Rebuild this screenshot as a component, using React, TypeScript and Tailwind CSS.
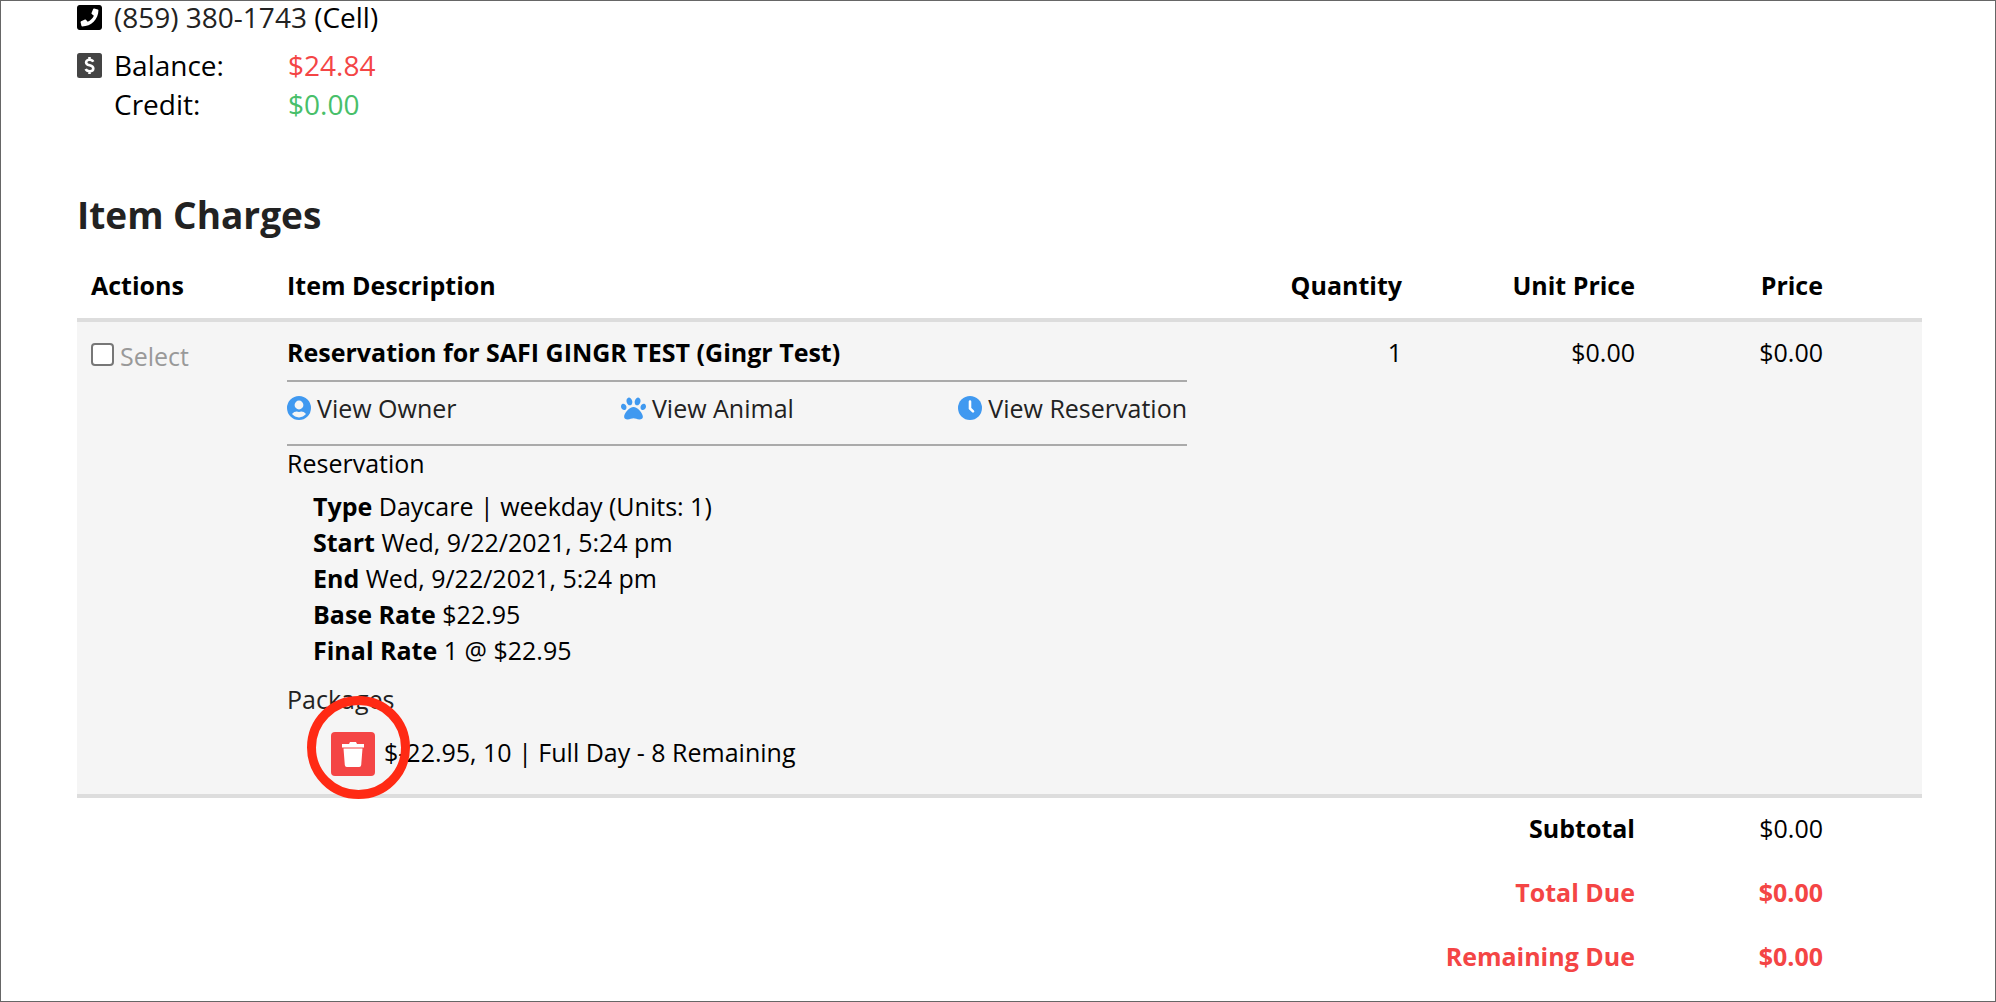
import type { ReactNode } from "react";
import { FaPaw, FaPhoneSquare } from "react-icons/fa";

function DollarSquareIcon() {
  return (
    <svg viewBox="0 0 25 25" className="size-[25px]" aria-hidden="true">
      <rect width="25" height="25" rx="2.5" fill="#444" />
      <path
        d="M16.200 8.800C15.600 7.500 14.300 6.800 12.600 6.800c-2 0-3.500 1-3.500 2.600 0 3.900 7.200 2 7.200 6 0 1.800-1.600 2.800-3.700 2.800-1.900 0-3.300-.8-3.900-2.200M12.500 4v2.600M12.500 18.200V21"
        fill="none"
        stroke="#fff"
        strokeWidth="2.600"
      />
    </svg>
  );
}

function OwnerIcon() {
  return (
    <svg viewBox="0 0 24 24" className="size-6" fill="#4099f0" aria-hidden="true">
      <path
        fillRule="evenodd"
        d="M12 0a12 12 0 1 0 0 24 12 12 0 0 0 0-24zm0 4.600a4.400 4.400 0 1 1 0 8.800 4.400 4.400 0 0 1 0-8.800zm0 16.800c-2.800 0-5.300-1.300-7-3.300 1.200-1.900 3.300-2.600 4.700-2.600.9.3 1.500.4 2.300.4s1.400-.1 2.300-.4c1.400 0 3.500.7 4.700 2.600-1.700 2-4.200 3.300-7 3.300z"
      />
    </svg>
  );
}

function ClockIcon() {
  return (
    <svg viewBox="0 0 24 24" className="size-6" aria-hidden="true">
      <circle cx="12" cy="12" r="12" fill="#4099f0" />
      <path d="M12 5.500v6.900l3 3" fill="none" stroke="#fff" strokeWidth="2.600" strokeLinecap="round" />
    </svg>
  );
}

function TrashIcon() {
  return (
    <svg viewBox="0 0 22 25" className="h-[25px] w-[22px]" fill="#fff" aria-hidden="true">
      <path d="M0 2h7l1-2h6l1 2h7v3.500H0zM1.500 6.500h19l-1.300 16.500q-.2 2-2 2H4.800q-1.800 0-2-2z" />
    </svg>
  );
}

function ViewLink({ icon, children }: { icon: ReactNode; children: ReactNode }) {
  return (
    <a href="#" className="flex items-center gap-1.5 text-[#222]">
      {icon}
      {children}
    </a>
  );
}

const details = [
  ["Type", "Daycare | weekday (Units: 1)"],
  ["Start", "Wed, 9/22/2021, 5:24 pm"],
  ["End", "Wed, 9/22/2021, 5:24 pm"],
  ["Base Rate", "$22.95"],
  ["Final Rate", "1 @ $22.95"],
];

const headCell = "border-b-4 border-[#ddd] px-3.5 pt-[27px] pb-[15px] font-bold";
const bodyCell = "border-b-4 border-[#ddd] bg-[#f5f5f5] px-3.5 pt-3 pb-[18px] align-top";
const footCell = "px-3.5 pt-3 pb-4";

export default function App() {
  return (
    <main className="min-h-screen border border-[#666] bg-white pr-[73px] pl-[76px] font-['Open_Sans',sans-serif] text-[25px] leading-9 text-black">
      <section className="text-[28px] leading-[39px]">
        <div className="flex items-center gap-3 leading-8">
          <FaPhoneSquare className="h-[29px] w-[25px]" />
          <p>
            <a href="tel:8593801743" className="text-[#222]">(859) 380-1743</a> (Cell)
          </p>
        </div>
        <div className="mt-[13px] flex gap-3">
          <div className="pt-[7px]">
            <DollarSquareIcon />
          </div>
          <dl className="grid grid-cols-[174px_auto]">
            <dt>Balance:</dt>
            <dd className="text-[#f44545]">$24.84</dd>
            <dt>Credit:</dt>
            <dd className="text-[#48bf6a]">$0.00</dd>
          </dl>
        </div>
      </section>

      <h2 className="mt-[66px] text-[37px] leading-[50px] font-bold text-[#222]">Item Charges</h2>

      <table className="w-full table-fixed border-separate border-spacing-0">
        <colgroup>
          <col className="w-[196px]" />
          <col />
          <col className="w-[215px]" />
          <col className="w-[233px]" />
          <col className="w-[188px]" />
          <col className="w-[85px]" />
        </colgroup>
        <thead>
          <tr>
            <th className={`${headCell} text-left`}>Actions</th>
            <th className={`${headCell} text-left`}>Item Description</th>
            <th className={`${headCell} text-right`}>Quantity</th>
            <th className={`${headCell} text-right`}>Unit Price</th>
            <th className={`${headCell} text-right`}>Price</th>
            <td className={headCell} />
          </tr>
        </thead>
        <tbody>
          <tr>
            <td className={bodyCell}>
              <label className="flex items-start gap-1.5 pt-1 text-[#999]">
                <input
                  type="checkbox"
                  className="mt-[5px] size-[23px] appearance-none rounded-[4px] border-2 border-[#777] bg-white checked:bg-[#4099f0]"
                />
                Select
              </label>
            </td>
            <td className={bodyCell}>
              <p className="font-bold">Reservation for SAFI GINGR TEST (Gingr Test)</p>
              <nav className="mt-2.5 flex justify-between border-y-2 border-[#aaa] pt-2 pb-[18px]">
                <ViewLink icon={<OwnerIcon />}>View Owner</ViewLink>
                <ViewLink icon={<FaPaw className="size-[25px] text-[#4099f0]" />}>View Animal</ViewLink>
                <ViewLink icon={<ClockIcon />}>View Reservation</ViewLink>
              </nav>
              <p className="leading-[34px]">Reservation</p>
              <ul className="mt-2 pl-[26px]">
                {details.map(([name, value]) => (
                  <li key={name}>
                    <strong className="font-bold">{name}</strong> {value}
                  </li>
                ))}
              </ul>
              <p className="mt-[13px] text-[#222]">Packages</p>
              <div className="mt-[15px] flex gap-[9px] pl-11">
                <div className="relative">
                  <button
                    type="button"
                    aria-label="Remove package"
                    className="flex size-11 items-center justify-center rounded-[4px] bg-[#f44545]"
                  >
                    <TrashIcon />
                  </button>
                  <div className="pointer-events-none absolute -top-9 -left-6 size-[103px] rounded-full border-9 border-[#ff2a14]" />
                </div>
                <p className="pt-0.5">$-22.95, 10 | Full Day - 8 Remaining</p>
              </div>
            </td>
            <td className={`${bodyCell} text-right`}>1</td>
            <td className={`${bodyCell} text-right`}>$0.00</td>
            <td className={`${bodyCell} text-right`}>$0.00</td>
            <td className={bodyCell} />
          </tr>
        </tbody>
        <tfoot>
          <tr>
            <th colSpan={4} className={`${footCell} text-right font-bold`}>Subtotal</th>
            <td className={`${footCell} text-right`}>$0.00</td>
            <td />
          </tr>
          <tr className="font-bold text-[#f44545]">
            <th colSpan={4} className={`${footCell} text-right`}>Total Due</th>
            <td className={`${footCell} text-right`}>$0.00</td>
            <td />
          </tr>
          <tr className="font-bold text-[#f44545]">
            <th colSpan={4} className={`${footCell} text-right`}>Remaining Due</th>
            <td className={`${footCell} text-right`}>$0.00</td>
            <td />
          </tr>
        </tfoot>
      </table>
    </main>
  );
}
